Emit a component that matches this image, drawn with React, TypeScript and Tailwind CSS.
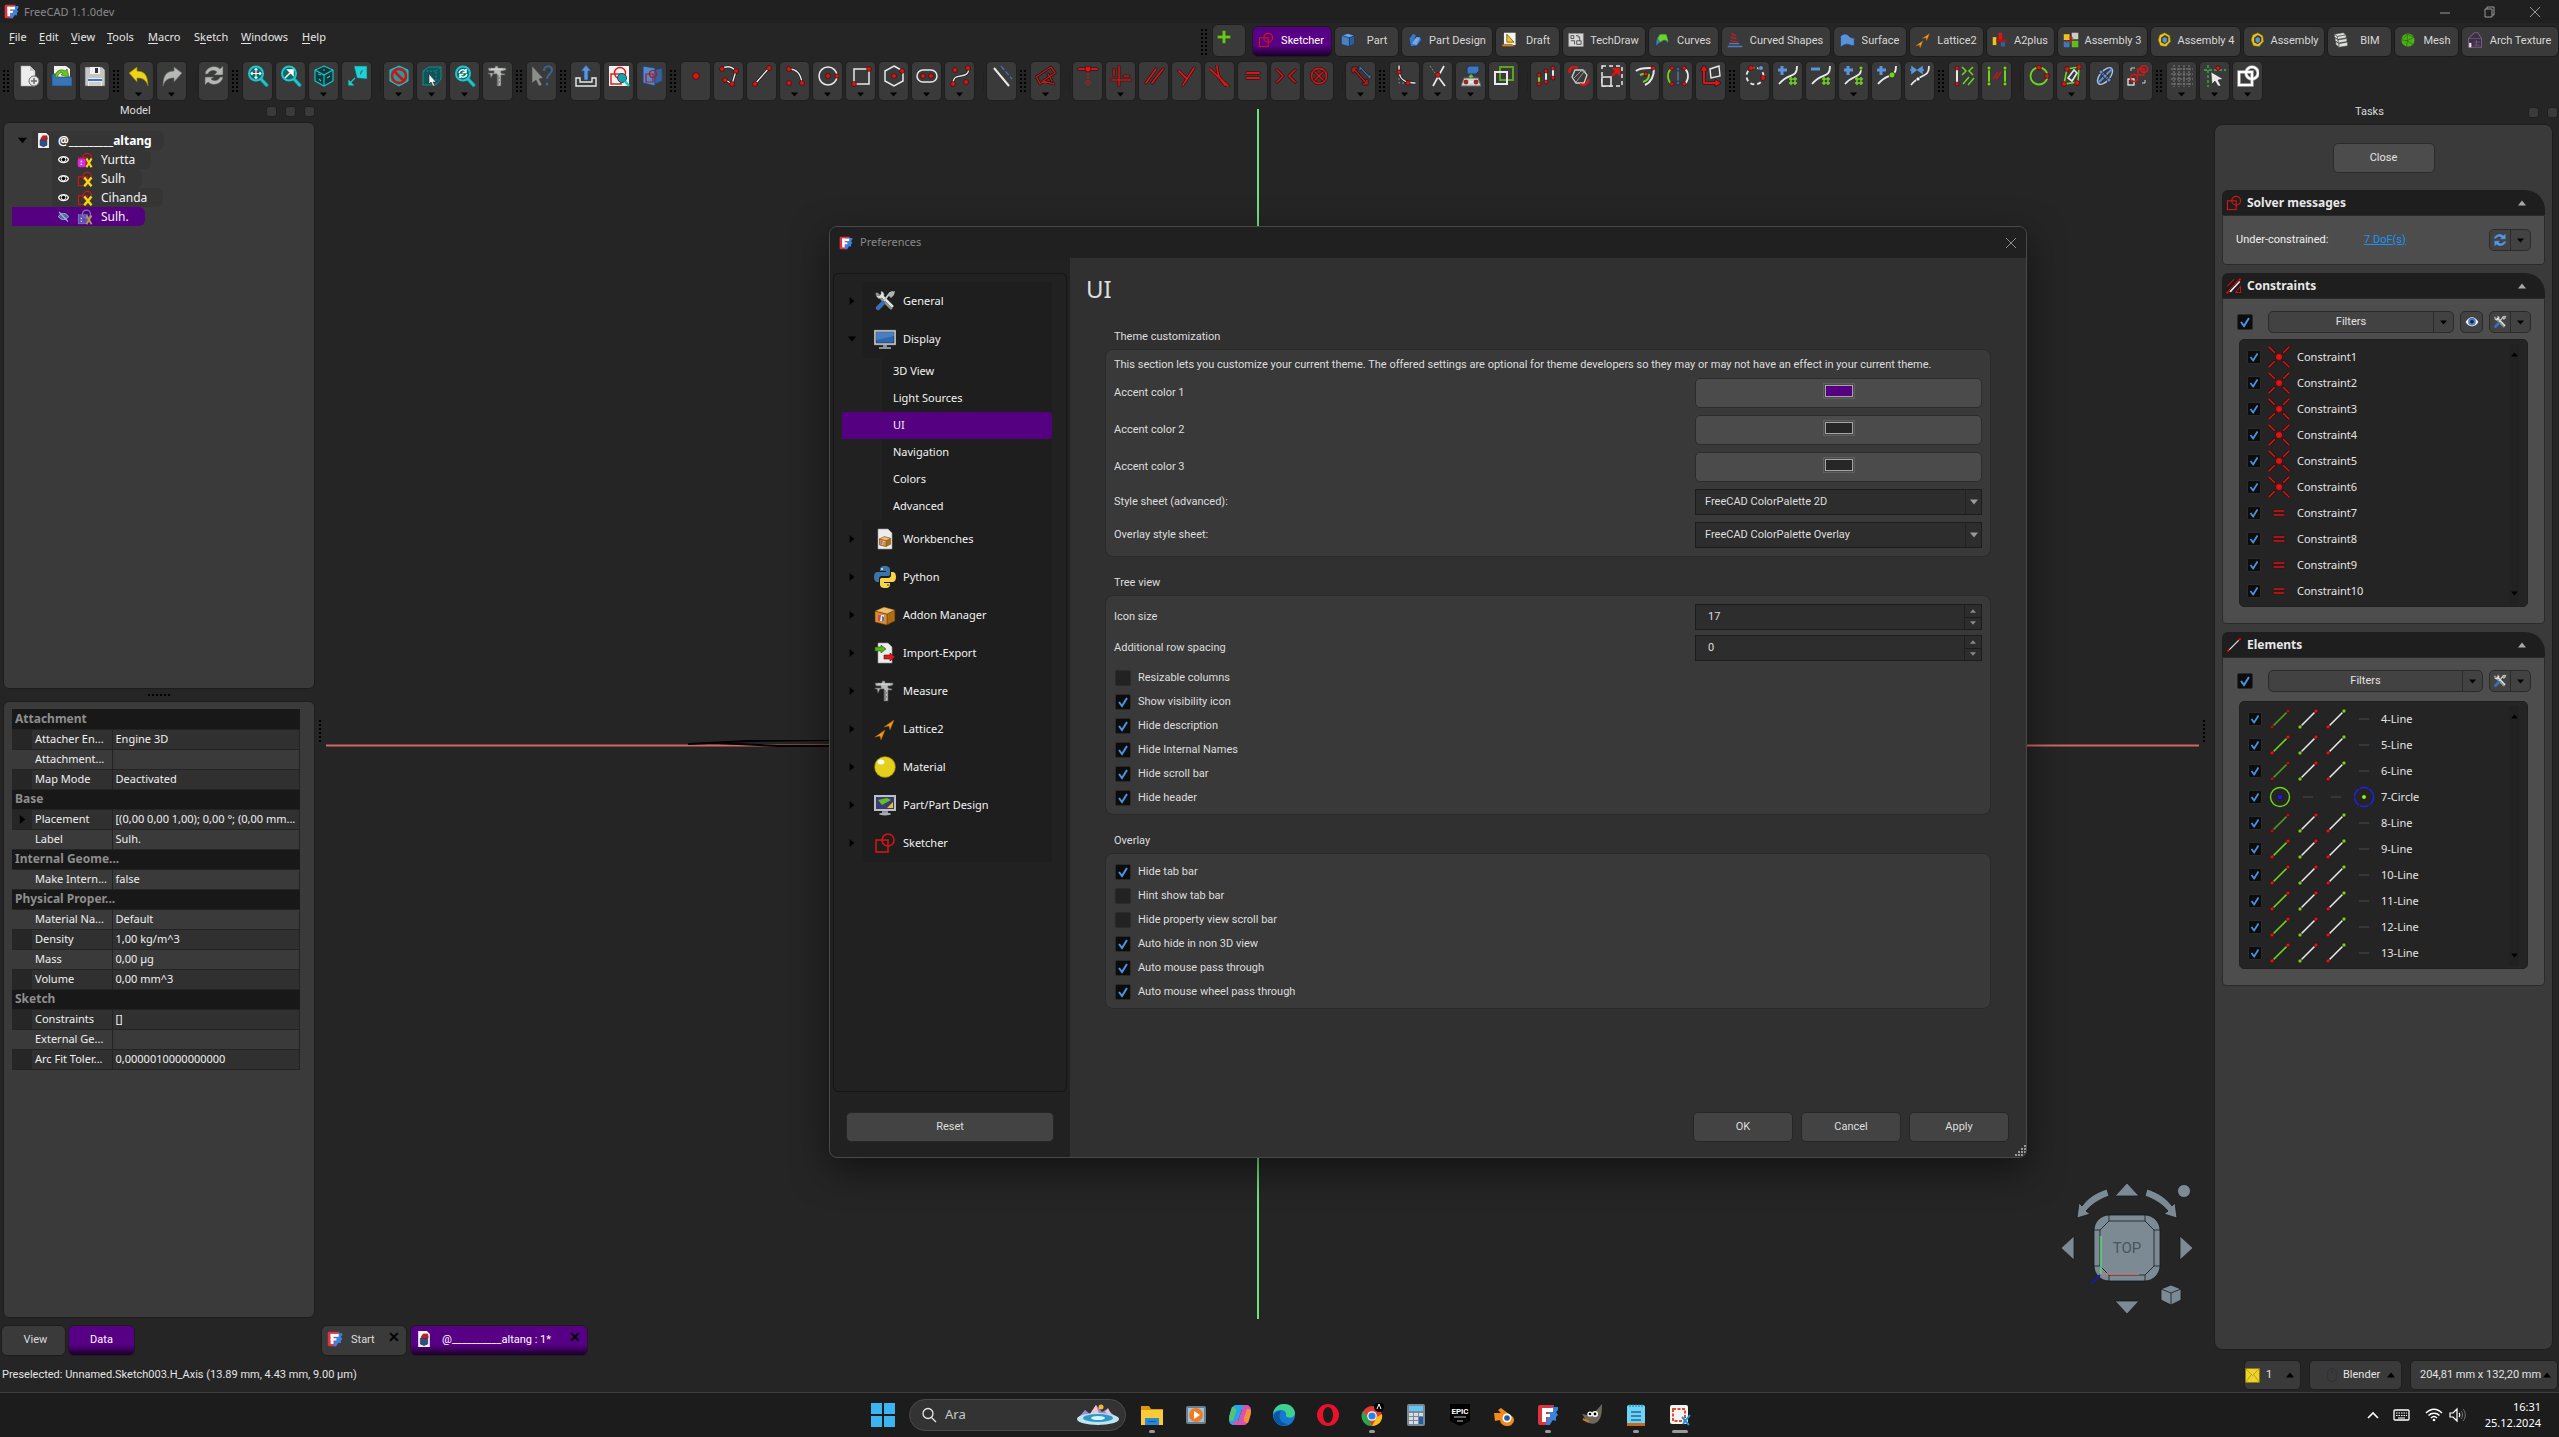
import React, { ReactNode, useId } from "react";

const NOTO = "font-['Noto_Sans',sans-serif]";

/* ---------- drawing helpers ---------- */

function P({ d, c = "#e01414", w = 2, o = true, f = "none" }: { d: string; c?: string; w?: number; o?: boolean; f?: string }) {
  return (
    <>
      {o && <path d={d} fill="none" stroke="#1a1010" strokeWidth={w + 1.2} strokeLinecap="round" strokeLinejoin="round" />}
      <path d={d} fill={f} stroke={c} strokeWidth={w} strokeLinecap="round" strokeLinejoin="round" />
    </>
  );
}

function D({ x, y, c = "#e01414", r = 2 }: { x: number; y: number; c?: string; r?: number }) {
  return <circle cx={x} cy={y} r={r} fill={c} stroke="#2a0808" strokeWidth={0.6} />;
}

const W = "#e8eaea";
const G = "#6fd41e";
const B = "#5b95dc";
const T = "#1fc8cc";

const Sheet = () => <path d="M4 1h10l4 4v16H4z" fill="#ececec" stroke="#999" strokeWidth={0.6} />;

const Lens = ({ children }: { children?: ReactNode }) => (
  <>
    <path d="M13.500 13.500l6 6.500" stroke="#128c90" strokeWidth={4} strokeLinecap="round" />
    <path d="M13.500 13.500l6 6.500" stroke={T} strokeWidth={2.400} strokeLinecap="round" />
    <circle cx={9} cy={8.500} r={7} fill="#12686b" stroke={T} strokeWidth={2} />
    {children}
  </>
);

const Caliper = () => (
  <>
    <path d="M1 3h7V1h3v2h8v2l-3 1h-2v2l4 1v1h-4v11h-4V9H6l-2 4-1-4H1V8h6V6H2z" fill="#b9bdb9" stroke="#555" strokeWidth={0.7} />
    <path d="M10 11h2M10 13h3M10 15h2M10 17h3M10 19h2" stroke="#444" strokeWidth={0.8} />
    <path d="M4 4h12" stroke="#e6e6e6" strokeWidth={0.8} />
  </>
);

const Grid = ({ x, y }: { x: number; y: number }) => (
  <path d={`M${x + 2} ${y}v8M${x + 6} ${y}v8M${x} ${y + 2}h8M${x} ${y + 6}h8`} stroke={G} strokeWidth={1.500} />
);

const SketchMark = () => (
  <>
    <rect x={2} y={8} width={12} height={12} fill="none" stroke="#d01616" strokeWidth={1.600} />
    <circle cx={14} cy={8} r={6} fill="none" stroke="#d01616" strokeWidth={1.600} />
  </>
);

const Plane = ({ x, y }: { x: number; y: number }) => (
  <path d={`M${x} ${y + 7}L${x + 10} ${y}L${x + 6} ${y + 10}L${x + 5} ${y + 6}z`} fill="#f39a1e" stroke="#a35d00" strokeWidth={0.5} />
);

const Nut = () => (
  <>
    <path d="M5 4l7-3 7 4 1 8-6 7-8-1-3-8z" fill="#e8c51c" stroke="#7a6200" strokeWidth={0.8} />
    <path d="M7 8l5-4 5 3 0 6-5 4-5-3z" fill="#3c3c3c" />
    <path d="M9 9l3-2 3 2v4l-3 2-3-2z" fill="#5e93c8" />
  </>
);

const Box3 = ({ c1 = "#6ea4dc", c2 = "#2d5d9c", c3 = "#4a80c2" }: { c1?: string; c2?: string; c3?: string }) => (
  <g stroke="#12294a" strokeWidth={0.6}>
    <path d="M2 5l9-3 9 3-7 3z" fill={c1} />
    <path d="M2 5l11 3v12L2 17z" fill={c3} />
    <path d="M13 8l7-3v11l-7 4z" fill={c2} />
  </g>
);

const Tools = () => (
  <>
    <path d="M3 4l4 4M7 8l10 10" stroke="#8f9792" strokeWidth={3} strokeLinecap="round" />
    <path d="M2 5a4 4 0 0 0 6 3l10 10 2-2L10 6a4 4 0 0 0-3-5l0 3-2 2z" fill="#dfe2dd" stroke="#555" strokeWidth={0.5} />
    <path d="M19 2l-3 1-8 10" fill="none" stroke="#c9cdc8" strokeWidth={2} />
    <path d="M9 13l-5 5" stroke="#3a6fb5" strokeWidth={4.500} strokeLinecap="round" />
    <path d="M14 5l3-3 4-1-1 4-3 3z" fill="#aab3ad" />
  </>
);

const Package = () => (
  <>
    <path d="M1 7l9-4 11 3v11l-8 4-12-3z" fill="#b06c12" stroke="#4a2c05" strokeWidth={0.7} />
    <path d="M1 7l12 3v11L1 18z" fill="#d68f30" stroke="#4a2c05" strokeWidth={0.5} />
    <path d="M1 7l9-4 11 3-8 4z" fill="#f0bd6e" stroke="#4a2c05" strokeWidth={0.5} />
    <rect x={4} y={11} width={6} height={6} fill="#e8e8ee" />
    <path d="M4 11h3l-1 6H4z" fill="#d8434c" />
    <path d="M8 12l2 1v4H8z" fill="#3f7fd0" />
  </>
);

const FreeCadMark = () => (
  <>
    <path d="M3 1h14l-4 20H3a2 2 0 0 1-2-2V3a2 2 0 0 1 2-2z" fill="#d9343f" />
    <path d="M11 10l3-7h7v3l-2 2 2 3-2 2 0 4-3-1-2 3-2 2h-3z" fill="#3b82dc" />
    <rect x={5} y={4} width={4} height={14} fill="#fff" />
    <rect x={5} y={4} width={11} height={4} fill="#fff" />
    <rect x={5} y={10} width={8} height={3} fill="#fff" />
  </>
);

const LineIcon = ({ c = W, a = "#e01414", b = "#e01414" }: { c?: string; a?: string; b?: string }) => (
  <>
    <path d="M3 19L19 3" stroke={c} strokeWidth={1.600} />
    <D x={3} y={19} c={a} />
    <D x={19} y={3} c={b} />
  </>
);

const icons: Record<string, ReactNode> = {
  new: (
    <>
      <path d="M3 1h9l5 5v15H3z" fill="#ededed" stroke="#aaa" strokeWidth={0.6} />
      <path d="M12 1v5h5z" fill="#c7c7c7" />
      <circle cx={16} cy={16} r={5} fill="#e8e8e8" stroke="#6a6a6a" />
      <path d="M16 13v6M13 16h6" stroke="#6a6a6a" strokeWidth={1.500} />
    </>
  ),
  open: (
    <>
      <path d="M3 1h12l4 3v10H3z" fill="#f2f2f2" />
      <path d="M1 9h4l2 3h14v9H1z" fill="#3973b8" stroke="#1c4376" strokeWidth={0.6} />
      <path d="M4 12c0-6 6-9 10-6l2-2 2 8-8-2 2-2c-3-1-5 1-6 5z" fill="#6cc51c" stroke="#2c6a00" strokeWidth={0.6} />
    </>
  ),
  save: (
    <>
      <path d="M1 2h17l3 3v16H1z" fill="#c3c6c2" stroke="#555" strokeWidth={0.6} />
      <rect x={6} y={2} width={10} height={7} fill="#f0f0f0" />
      <rect x={11} y={3} width={3} height={5} fill="#333" />
      <rect x={4} y={13} width={14} height={8} fill="#ececec" />
      <path d="M4 14h14v2H4z" fill="#3f76bb" />
      <path d="M5 18h12M5 20h12" stroke="#999" strokeWidth={0.7} />
    </>
  ),
  undo: <path d="M1 8l8-6v4c8 0 11 5 11 15-2-6-5-8-11-8v4z" fill="#ecd41b" stroke="#8c7600" strokeWidth={0.7} />,
  redo: <path d="M21 8l-8-6v4c-8 0-11 5-11 15 2-6 5-8 11-8v4z" fill="#b5b8b5" stroke="#666" strokeWidth={0.7} />,
  refresh: (
    <g fill="#b5b8b5" stroke="#555" strokeWidth={0.6}>
      <path d="M2 9C3 2 12-1 17 4l3-3v9h-9l3-3c-4-3-8-1-9 2z" />
      <path d="M20 12c-1 7-10 10-15 5l-3 3v-8h9l-3 2c4 3 8 1 9-2z" />
    </g>
  ),
  fitall: <Lens><path d="M9 3.500v10M4 8.500h10M7.500 5L9 3.500 10.500 5M7.500 12L9 13.500l1.500-1.500M5.500 7L4 8.500 5.500 10M12.500 7l1.500 1.500-1.500 1.500" fill="none" stroke="#fff" strokeWidth={1.100} /></Lens>,
  fitsel: <Lens><path d="M5 13l6-6M8 5h5v5z" fill="#fff" stroke="#fff" strokeWidth={1.500} /></Lens>,
  iso: (
    <g fill="#0c3a3c" stroke={T} strokeWidth={1.100}>
      <path d="M11 1l9 4v11l-9 5-9-5V5z" />
      <path d="M2 5l9 5 9-5M11 10v11" fill="none" />
      <path d="M5 9l3 1M14 13l3-2M6 14l2 2M10 5l2 0" fill="none" />
    </g>
  ),
  align: (
    <>
      <path d="M8 1h13v13l-10-1z" fill="#22cfd3" stroke="#0a6a6c" strokeWidth={0.6} />
      <path d="M14 10c0-3 1-5 3-5l-2 4z" fill="#0f7d80" />
      <path d="M9 13l-4 4M3 16v4h4z" stroke={T} strokeWidth={1.200} fill={T} />
    </>
  ),
  drawstyle: (
    <>
      <path d="M11 1l9 4v11l-9 5-9-5V5z" fill="#1f9fa2" stroke={T} />
      <circle cx={11} cy={11} r={7} fill="none" stroke="#cf1212" strokeWidth={2.600} />
      <path d="M6 6l10 10" stroke="#cf1212" strokeWidth={2.600} />
    </>
  ),
  boxsel: (
    <>
      <path d="M2 6l6-4h12v12l-5 6H2z" fill="#0d5558" stroke="#1a8a8d" />
      <path d="M2 6h13v14M15 6l5-4" fill="none" stroke="#1a8a8d" strokeDasharray="2 1.500" />
      <path d="M8 9l7 8-3 0 2 4-2 0-2-4-2 2z" fill="#f5f5f5" stroke="#222" strokeWidth={0.5} />
    </>
  ),
  sync: <Lens><path d="M5 8c1-4 6-4 7-1M13 9c-1 4-6 4-7 1M12 4v3.500H8.500M6 13V9.500h3.500" fill="none" stroke="#e6ffff" strokeWidth={1.500} /></Lens>,
  measure: <Caliper />,
  whatsthis: (
    <>
      <path d="M1 1l11 12-4 1 3 6-3 1-3-6-4 3z" fill="#8b8f8b" stroke="#444" strokeWidth={0.6} />
      <path d="M13 6c0-6 8-6 8-1 0 4-5 4-5 9" fill="none" stroke="#3d6296" strokeWidth={2} />
      <circle cx={16} cy={19} r={1.500} fill="#3d6296" />
    </>
  ),
  leave: (
    <>
      <path d="M1 13h4v4h12v-4h4v8H1z" fill="none" stroke={W} strokeWidth={1.400} />
      <path d="M11 0l5 6h-3v9H9V6H6z" fill={B} stroke="#214c85" strokeWidth={0.7} />
    </>
  ),
  viewsketch: (
    <>
      <rect x={1} y={1} width={20} height={20} fill="#f1f1f1" />
      <rect x={3} y={9} width={10} height={10} fill="none" stroke="#e01414" strokeWidth={1.400} />
      <circle cx={12} cy={8} r={5.500} fill="none" stroke="#e01414" strokeWidth={1.400} />
      <circle cx={14} cy={13} r={4.500} fill="#1d9fa8" stroke="#0a5a60" />
      <path d="M17 16l4 5" stroke={T} strokeWidth={2.500} />
    </>
  ),
  viewsection: (
    <>
      <path d="M2 1l12 2v18L2 18z" fill="#5288cc" stroke="#1f447a" />
      <path d="M14 5l7-2v13l-7 3z" fill="#34629f" stroke="#1f447a" strokeWidth={0.6} />
      <path d="M5 9h7v8H5z" fill="none" stroke="#b01616" strokeWidth={1.200} />
      <circle cx={12} cy={9} r={3.500} fill="none" stroke="#b01616" strokeWidth={1.200} />
    </>
  ),
  point: <D x={11} y={11} r={3.300} />,
  polyline: (
    <>
      <P d="M4 4c5-4 10-2 14 2l-4 13-6-4" c={W} w={1.400} />
      <D x={4} y={4} r={2.400} /><D x={18} y={6} r={2.400} /><D x={14} y={19} r={2.400} /><D x={7} y={15} r={2.400} />
    </>
  ),
  line: (
    <>
      <P d="M4 19L18 3" c={W} w={1.400} />
      <D x={4} y={19} r={2.400} /><D x={18} y={3} r={2.400} />
    </>
  ),
  arc: (
    <>
      <P d="M5 4c8 0 12 6 13 14" c={W} w={1.400} />
      <D x={5} y={4} r={2.400} /><D x={18} y={18} r={2.400} /><D x={5} y={18} r={2.400} />
    </>
  ),
  circle: (
    <>
      <circle cx={11} cy={11} r={9} fill="none" stroke={W} strokeWidth={1.500} />
      <D x={11} y={11} r={2.400} /><D x={20} y={11} r={2.200} />
    </>
  ),
  rect: (
    <>
      <rect x={4} y={4} width={15} height={15} fill="none" stroke={W} strokeWidth={1.500} />
      <D x={19} y={4} r={2.400} /><D x={4} y={19} r={2.400} />
    </>
  ),
  poly: (
    <>
      <path d="M11 1l9 5v10l-9 5-9-5V6z" fill="none" stroke={W} strokeWidth={1.500} />
      <D x={11} y={11} r={2.400} /><D x={19} y={6} r={2.400} />
    </>
  ),
  slot: (
    <>
      <rect x={1} y={5} width={20} height={12} rx={6} fill="none" stroke={W} strokeWidth={1.500} />
      <D x={7} y={11} r={2.400} /><D x={15} y={11} r={2.400} />
    </>
  ),
  spline: (
    <>
      <P d="M4 19c0-14 15-2 16-16" c={W} w={1.400} />
      <D x={4} y={19} r={2.400} /><D x={19} y={3} r={2.400} /><D x={6} y={5} r={2.400} /><D x={17} y={17} r={2.400} />
    </>
  ),
  construction: (
    <>
      <path d="M3 3l15 18" stroke={W} strokeWidth={2} />
      <path d="M10 1l11 13" stroke="#4575b4" strokeWidth={1.200} strokeDasharray="5 2" />
    </>
  ),
  dimension: <P d="M1 12L16 2l4 6-12 8 11 3M2 13l3 6 4-3M13 9l4 7" c="#c01818" w={1.500} />,
  coincident: (
    <>
      <P d="M2 4h18" w={1.800} />
      <D x={11} y={4} r={3} />
      <path d="M11 8v8" stroke="#c01818" strokeWidth={1.300} strokeDasharray="2 1.500" />
      <circle cx={11} cy={18} r={2} fill="none" stroke="#c01818" />
    </>
  ),
  hv: <P d="M9 1v20M1 15h20M4 4v7M14 11h5" w={1.500} />,
  parallel: <P d="M3 18L13 4M9 18L20 4" w={1.800} />,
  perp: <P d="M18 3L7 20M3 6l8 8" w={1.800} />,
  tangent: <P d="M1 4l18 17M8 1c0 9 3 14 8 19" w={1.800} />,
  equal: <P d="M5 8h12M5 13h12" w={2} />,
  symmetric: <P d="M2 5l6 6-6 6M20 5l-6 6 6 6" w={1.700} />,
  block: (
    <>
      <circle cx={11} cy={11} r={7.500} fill="none" stroke="#1a1010" strokeWidth={3} />
      <circle cx={11} cy={11} r={7.500} fill="none" stroke="#d01818" strokeWidth={1.800} />
      <P d="M7 7l8 8M15 7l-8 8" w={1.600} />
    </>
  ),
  toggle: (
    <>
      <P d="M3 3l14 16M3 3l0 4M3 3l4 0M17 19v-4M17 19h-4" c="#c01818" w={1.600} />
      <P d="M10 2l10 11M20 13v-3M10 2v3" c="#466fa8" w={1.300} />
    </>
  ),
  fillet: (
    <>
      <path d="M5 1v17h16" fill="none" stroke="#888" strokeDasharray="2 2" />
      <P d="M5 1v6c1 7 5 11 16 11" c={W} w={1.500} />
      <D x={5} y={7} r={2.200} /><D x={14} y={18} r={2.200} />
    </>
  ),
  trim: (
    <>
      <path d="M17 1L6 21M9 9l9 12" stroke={W} strokeWidth={1.700} />
      <path d="M3 1l5 7" stroke="#888" strokeDasharray="2 1.500" />
      <D x={11} y={10} r={2.400} />
    </>
  ),
  external: (
    <>
      <path d="M7 3l2-2h10v5l-3 3H7z" fill="#3f76c0" stroke="#17345e" />
      <path d="M11 9v4M9 11l2 3 2-3z" stroke={G} fill={G} />
      <path d="M1 21l3-8h14l3 8z" fill="#cfd3cf" stroke="#666" />
      <path d="M6 17h10" stroke="#fff" /><D x={6} y={17} /><D x={16} y={17} />
    </>
  ),
  carbon: (
    <>
      <rect x={7} y={2} width={13} height={13} fill="none" stroke="#5aa31a" strokeWidth={2} />
      <rect x={2} y={7} width={12} height={12} fill="none" stroke={W} strokeWidth={2} />
    </>
  ),
  translate: (
    <>
      <path d="M4 11v8" stroke={G} strokeWidth={2} /><path d="M11 7v9M18 3v10" stroke={W} strokeWidth={2} />
      <D x={4} y={10} /><D x={4} y={19} /><D x={11} y={6} /><D x={11} y={17} /><D x={18} y={3} /><D x={18} y={13} />
    </>
  ),
  rotate: (
    <>
      <path d="M7 5h8l4 5-3 8H8l-4-6z" fill="none" stroke="#cfd2cf" strokeWidth={1.300} />
      <path d="M5 14L13 6h5M8 17l8-10" fill="none" stroke="#999" />
      <path d="M1 7c1-5 5-6 9-4M4 2L1 8M21 14c-1 5-5 7-9 5M17 20l4-5" fill="none" stroke="#e01414" strokeWidth={2.200} />
    </>
  ),
  scale: (
    <>
      <rect x={1} y={1} width={20} height={20} fill="none" stroke={W} strokeDasharray="4 3" strokeWidth={1.500} />
      <rect x={1} y={12} width={9} height={9} fill="#3a3a3a" stroke={W} strokeWidth={1.500} />
      <path d="M11 11l5-5M13 4h5v5z" stroke="#e01414" fill="#e01414" strokeWidth={2} />
    </>
  ),
  offset: (
    <>
      <path d="M2 6C6 2 16 3 20 3c0 8-2 14-9 17" fill="none" stroke={W} strokeWidth={2} />
      <path d="M6 10c5-2 8-1 9 0 0 4-3 6-6 7" fill="none" stroke={G} strokeWidth={2} />
      <D x={12} y={9} /><D x={19} y={3} />
    </>
  ),
  symmetry: (
    <>
      <path d="M6 2C-1 7 0 15 5 20" fill="none" stroke={G} strokeWidth={1.800} />
      <path d="M16 2c7 5 6 13 1 18" fill="none" stroke={W} strokeWidth={1.800} />
      <path d="M11 4v14" stroke={B} /><D x={11} y={4} c="#3465a4" /><D x={11} y={18} c="#3465a4" />
      <D x={5} y={3} /><D x={17} y={3} /><D x={5} y={19} /><D x={17} y={19} />
    </>
  ),
  axes: (
    <>
      <P d="M4 18V3M2 5l2-3 2 3M4 18h14M16 16l3 2-3 2" w={2} />
      <path d="M10 4l9-3 1 10-9 2z" fill="none" stroke={W} strokeWidth={1.400} />
    </>
  ),
  nurbs: (
    <>
      <circle cx={11} cy={11} r={8.500} fill="none" stroke={W} strokeWidth={1.800} strokeDasharray="4 3" />
      <D x={7} y={3} r={2.500} /><D x={17} y={3} r={2.500} c={B} /><D x={19} y={13} r={2.500} />
    </>
  ),
  degup: (
    <>
      <path d="M5 1v9M1 5h9" stroke={B} strokeWidth={3} />
      <path d="M20 1c0 13-8 6-18 18" fill="none" stroke={W} strokeWidth={1.800} /><Grid x={12} y={12} />
    </>
  ),
  degdown: (
    <>
      <path d="M1 4h9" stroke={B} strokeWidth={3} />
      <path d="M20 1c0 13-8 6-18 18" fill="none" stroke={W} strokeWidth={1.800} /><Grid x={12} y={12} />
    </>
  ),
  knotup: (
    <>
      <path d="M5 1v9M1 5h9" stroke={B} strokeWidth={3} />
      <path d="M18 2c1 12-8 7-16 17" fill="none" stroke={W} strokeWidth={1.800} />
      <Grid x={12} y={12} /><D x={18} y={3} c={G} />
    </>
  ),
  insertknot: (
    <>
      <path d="M5 1v9M1 5h9" stroke={B} strokeWidth={3} />
      <path d="M20 1c0 13-8 6-18 18" fill="none" stroke={W} strokeWidth={1.800} /><D x={16} y={10} c={G} r={3} />
    </>
  ),
  join: (
    <>
      <path d="M1 5h4M3 2l4 3-4 3zM15 5h-4M13 2L9 5l4 3z" stroke={B} fill={B} strokeWidth={1.500} />
      <path d="M20 1c0 13-8 6-18 19" fill="none" stroke={W} strokeWidth={1.800} /><D x={9} y={14} c="#fff" />
    </>
  ),
  selconstr: (
    <>
      <path d="M4 3v16" stroke={W} strokeWidth={2} /><D x={4} y={3} /><D x={4} y={19} />
      <path d="M9 2l4 4-4 4M20 2l-4 4 4 4M10 19l6-7M15 20l6-7" fill="none" stroke={G} strokeWidth={1.500} />
    </>
  ),
  selelem: (
    <>
      <path d="M3 3v16M19 3v16" stroke={G} strokeWidth={2} />
      <D x={3} y={3} c={G} /><D x={3} y={19} c={G} /><D x={19} y={3} c={G} /><D x={19} y={19} c={G} />
      <path d="M7 14l5-7M10 14l5-7" stroke="#c01818" strokeWidth={1.500} />
    </>
  ),
  arcsel: (
    <>
      <circle cx={11} cy={11} r={8.500} fill="none" stroke={G} strokeWidth={1.800} />
      <D x={11} y={2.500} r={2.400} /><D x={19} y={11} r={2.400} />
    </>
  ),
  polysel: (
    <>
      <path d="M6 4l12-2-1 15L3 19z" fill="none" stroke={G} strokeWidth={1.600} />
      <path d="M7 13l6-8 3 3-5 8z" fill="none" stroke={W} strokeWidth={1.600} />
      <D x={6} y={4} r={2.400} /><D x={18} y={2} r={2.400} /><D x={16} y={18} r={2.400} /><D x={3} y={19} r={2.400} />
    </>
  ),
  ellipse: (
    <>
      <ellipse cx={11} cy={11} rx={10} ry={5} transform="rotate(-50 11 11)" fill="none" stroke="#a8c6ea" strokeWidth={1.400} />
      <path d="M4 18L18 4M7 7l8 8" stroke={B} strokeWidth={1.800} />
      <D x={11} y={11} c={B} /><D x={7} y={7} c={B} /><D x={15} y={15} c={B} />
    </>
  ),
  swap: (
    <>
      <rect x={1} y={14} width={6} height={6} fill="none" stroke={W} strokeWidth={1.300} />
      <circle cx={7} cy={13} r={3.500} fill="none" stroke="#e01414" strokeWidth={1.500} />
      <rect x={11} y={4} width={6} height={6} fill="none" stroke="#e01414" strokeWidth={1.300} />
      <circle cx={17} cy={4} r={3.500} fill="none" stroke="#e01414" strokeWidth={1.500} />
      <path d="M4 6V3h4M15 18h3v-3" fill="none" stroke="#ccc" />
    </>
  ),
  grid: <path d="M3 0v22M8 0v22M13 0v22M18 0v22M0 4h22M0 9h22M0 14h22M0 19h22" stroke="#888" strokeWidth={0.9} strokeDasharray="2 1" />,
  snap: (
    <>
      <path d="M4 0v22M0 5h22" stroke="#39b54a" strokeWidth={1.300} strokeDasharray="3 2" />
      <path d="M7 7l12 7-5 1 3 6-3 0-3-5-3 3z" fill="#e8e8e8" stroke="#222" strokeWidth={0.5} />
      <D x={14} y={3} r={2.200} />
    </>
  ),
  order: (
    <>
      <rect x={2} y={7} width={13} height={13} fill="none" stroke="#aaa" strokeWidth={3.500} />
      <circle cx={15} cy={8} r={6} fill="none" stroke="#aaa" strokeWidth={3.500} />
      <rect x={2} y={7} width={13} height={13} fill="none" stroke="#fff" strokeWidth={2} />
      <circle cx={15} cy={8} r={6} fill="none" stroke="#fff" strokeWidth={2} />
    </>
  ),

  sketcher: <SketchMark />,
  part: <Box3 />,
  partdesign: (
    <>
      <path d="M3 9l5-7 5 2-2 5 7-3 2 5-6 8-9 1z" fill="#3f76c0" stroke="#16315a" strokeWidth={0.8} />
      <path d="M7 16l6-9 5 1-5 10z" fill="#78a8e0" />
    </>
  ),
  draft: (
    <>
      <path d="M4 1h16v17H4z" fill="#f4f4f4" /><path d="M8 3v11h10z" fill="#f0c81a" stroke="#5c4700" />
      <path d="M1 17h14l4 3H2z" fill="#c98a2d" stroke="#5c3a05" strokeWidth={0.6} />
    </>
  ),
  techdraw: (
    <>
      <rect x={1} y={2} width={20} height={18} fill="#d8d8d8" stroke="#888" />
      <path d="M4 5h4v4H4zM11 5h3v3M16 6v6M4 12h5v5M12 12h6v5h-6z" fill="none" stroke="#444" strokeWidth={1.200} />
    </>
  ),
  curves: (
    <>
      <path d="M3 20C1 10 5 3 11 2s9 3 9 16c-3-6-6-7-8-5s-6 2-9 7z" fill="#3f76c0" stroke="#173056" />
      <path d="M8 3l9 0 3 10-6-2-6 3-3-5z" fill="#74cf2a" stroke="#2a6a00" strokeWidth={0.7} />
    </>
  ),
  cshapes: (
    <>
      <path d="M6 1l6 5 4 9 5 6H1l4-7z" fill="#3c3c46" />
      <path d="M6 2l6 3M5 7l8 2M4 12l11 2" stroke="#c22020" strokeWidth={1.800} />
      <path d="M3 16h14M1 20h20" stroke="#4f7fc0" strokeWidth={2} />
    </>
  ),
  surface: <path d="M2 6c5-5 9-4 12 0 2 2 5 3 7 2v11c-6 0-8-3-11-2s-6 2-8 4z" fill="#5b92d6" stroke="#1d3d6e" />,
  lattice: (
    <>
      <Plane x={10} y={2} />
      <Plane x={1} y={12} />
    </>
  ),
  a2plus: (
    <>
      <path d="M9 1h5v10H9z" fill="#e01414" /><path d="M1 7h5v11H1z" fill="#e8c51c" />
      <path d="M6 10h14v4H6z" fill="#b11414" /><path d="M12 14h6v6h-6z" fill="#355f9c" />
    </>
  ),
  asm3: (
    <>
      <path d="M1 3h8v8H1z" fill="#e8c51c" /><path d="M12 1h9v9h-9z" fill="#c9cdc8" />
      <path d="M1 13h8v8H1z" fill="#3f76c0" /><path d="M12 12h9v9h-9z" fill="#5dbf1e" />
      <path d="M9 8h5M11 6v10M5 11v4" stroke="#e01414" strokeWidth={1.600} />
    </>
  ),
  nut: <Nut />,
  bim: (
    <g fill="#dfe3df" stroke="#555" strokeWidth={0.8}>
      <path d="M2 3l12-2 4 3-12 2zM2 3l4 3v4L2 7zM6 6l12-2v4L6 10zM3 8l4 3v4l-4-3zM7 11l12-2v4L7 15zM4 13l4 3v5l-4-4zM8 16l12-2v5L8 21z" />
    </g>
  ),
  mesh: (
    <>
      <circle cx={11} cy={11} r={9} fill="#4fae17" />
      <path d="M2 11l8-8 9 4-9 5 8 6M2 11l8 1-1 8M10 3v9" fill="none" stroke="#236400" strokeWidth={0.9} />
    </>
  ),
  archtex: (
    <>
      <path d="M2 9l8-8h5l5 8v12H2z" fill="#3b3040" stroke="#7a5b84" strokeWidth={1.400} />
      <path d="M2 9h18M9 14h9M9 18h9M13 11v9" stroke="#7a5b84" />
      <path d="M3 15h3v6H3z" fill="#ededed" />
    </>
  ),
  tools: <Tools />,
  display: (
    <>
      <rect x={0} y={2} width={22} height={15} fill="#c9ccd0" stroke="#666" strokeWidth={0.5} />
      <rect x={2} y={4} width={18} height={11} fill="#2f66ad" stroke="#123" strokeWidth={0.5} />
      <path d="M2 4h18v4L2 12z" fill="#5b8dcb" opacity={0.6} />
      <path d="M9 17h4v2h4v2H5v-2h4z" fill="#8c9196" />
    </>
  ),
  workbenches: (
    <>
      <Sheet />
      <g transform="translate(5 7) scale(.55)"><Package /></g>
    </>
  ),
  python: (
    <>
      <path d="M11 0c-5 0-5 2-5 5h6v1H3c-4 0-4 10 0 10h2v-3c0-2 1-3 3-3h6c2 0 2-1 2-2V4c0-3-2-4-5-4z" fill="#3b74a8" />
      <path d="M11 22c5 0 5-2 5-5h-6v-1h9c4 0 4-10 0-10h-2v3c0 2-1 3-3 3H8c-2 0-2 1-2 2v4c0 3 2 4 5 4z" fill="#f7d54a" />
      <circle cx={8} cy={3} r={1} fill="#dfe9f2" /><circle cx={14} cy={19} r={1} fill="#806c10" />
    </>
  ),
  package: <Package />,
  impexp: (
    <>
      <Sheet />
      <path d="M1 5h6V3l5 4-5 4V9H1z" fill="#55b31b" stroke="#225c00" strokeWidth={0.6} />
      <path d="M10 13h6v-2l5 4-5 4v-2h-6z" fill="#d81e1e" stroke="#6d0000" strokeWidth={0.6} />
    </>
  ),
  material: (
    <>
      <ellipse cx={11} cy={11} rx={10.500} ry={10.500} fill="#e3cf1c" stroke="#7c6c00" strokeWidth={0.6} />
      <ellipse cx={7} cy={6} rx={3.500} ry={2.500} fill="#fffef0" />
    </>
  ),
  partpref: (
    <>
      <rect x={0} y={1} width={22} height={16} fill="#bcbfc4" />
      <rect x={2} y={3} width={18} height={12} fill="#3a3a78" />
      <path d="M4 6l9-2 4 2-9 5z" fill="#63bf22" /><path d="M13 14h6V8z" fill="#e8c51c" />
      <path d="M8 17h6v2H8z" fill="#8c9196" /><ellipse cx={11} cy={20} rx={6} ry={1.500} fill="#a8abb0" />
    </>
  ),
  freecad: <FreeCadMark />,
  coinc: (
    <>
      <P d="M1 1l5.500 5.500M21 1l-5.500 5.500M1 21l5.500-5.500M21 21l-5.500-5.500" w={1.500} />
      <D x={11} y={11} r={3.400} />
    </>
  ),
  equalsmall: <P d="M6 9h10M6 13h10" w={1.500} />,
  linew: <LineIcon />,
  lineg: <LineIcon c={G} />,
  linegd: <LineIcon c="#559c1c" a="#a81818" b="#a81818" />,
  linestart: <LineIcon a={G} />,
  lineend: <LineIcon b={G} />,
  dash: <path d="M6 11h10" stroke="#4a4a4a" strokeWidth={1} />,
  circleedge: (
    <>
      <circle cx={11} cy={11} r={9.500} fill="none" stroke={G} strokeWidth={1.400} />
      <D x={11} y={11} c="#1a1aff" r={2.600} />
    </>
  ),
  circlecenter: (
    <>
      <circle cx={11} cy={11} r={9.500} fill="none" stroke="#2020e8" strokeWidth={1.400} strokeDasharray="9 1" />
      <D x={11} y={11} c="#8aff1a" r={2.300} />
    </>
  ),
  constraints: (
    <>
      <path d="M5 19L19 3" stroke={W} strokeWidth={2} />
      <P d="M2 11L11 2M2 19L18 2M13 20h8M13 20l7-9v9" c="#b81818" w={1.500} />
      <path d="M6 19L19 5" stroke={W} strokeWidth={1.600} />
      <D x={2} y={20} /><D x={19} y={2} />
    </>
  ),
  refreshBlue: (
    <g fill={B} stroke="#234a80" strokeWidth={0.6}>
      <path d="M1 9C3 2 12-1 16 4l4-3v9h-9l2-3c-3-2-7-1-8 2z" />
      <path d="M21 13c-2 7-11 10-15 5l-4 3v-9h9l-2 3c3 2 7 1 8-2z" />
    </g>
  ),
  eye: (
    <>
      <path d="M1 11c5-10 15-10 20 0-5 9-15 9-20 0z" fill="#f2f2f2" />
      <circle cx={11} cy={10.500} r={6} fill="#4a7fc4" /><circle cx={11} cy={10.500} r={2.800} fill="#14233c" />
    </>
  ),
  visible: (
    <>
      <path d="M1 11C5 3 17 3 21 11c-4 8-16 8-20 0z" fill="#0a0a0a" stroke="#f4f4f4" strokeWidth={2.500} />
      <circle cx={11} cy={11} r={4.500} fill="none" stroke="#f4f4f4" strokeWidth={2} />
    </>
  ),
  hidden: (
    <>
      <path d="M1 11C5 3 17 3 21 11c-4 8-16 8-20 0z" fill="#4b6d9e" stroke="#9fb6d6" strokeWidth={2} />
      <path d="M2 2l18 19" stroke="#9fb6d6" strokeWidth={2.200} />
    </>
  ),
  doc: (
    <>
      <path d="M3 0h12l4 4v18H3z" fill="#f2f2f2" />
      <path d="M6 10l5-2 5 2v8l-5 2-5-2z" fill="#2d4f86" stroke="#14233c" strokeWidth={0.8} />
      <path d="M10 4l6 0 1 5-6 2-4-3z" fill="#c61f1f" stroke="#5c0c0c" strokeWidth={0.6} />
    </>
  ),
  sk: (
    <>
      <SketchMark />
      <path d="M10 9l10 12M20 9L10 21" stroke="#6b5500" strokeWidth={4.500} /><path d="M10 9l10 12M20 9L10 21" stroke="#f4d81c" strokeWidth={3} />
    </>
  ),
  skattach: (
    <>
      <SketchMark />
      <rect x={1} y={9} width={11} height={12} rx={3} fill="#d62be0" />
      <path d="M6 12v2M6 16v2" stroke="#fff" strokeWidth={2} />
      <path d="M13 9l7 12M20 9l-7 12" stroke="#f4d81c" strokeWidth={3} />
    </>
  ),
  skhidden: (
    <g opacity={0.85}>
      <rect x={2} y={8} width={12} height={12} fill="#6a55c8" stroke="#6f7fb8" strokeWidth={1.600} />
      <circle cx={13} cy={7} r={5.500} fill="none" stroke="#8090c0" strokeWidth={1.600} />
      <path d="M6 12v2M6 16v2" stroke="#cfd" strokeWidth={2} />
      <path d="M13 9l7 12M20 9l-7 12" stroke="#b8b84a" strokeWidth={2.600} />
    </g>
  ),
  plus: <path d="M8.500 1h5v7.500H21v5h-7.500V21h-5v-7.500H1v-5h7.500z" fill="#6cc51c" stroke="#336c00" strokeWidth={0.6} />,
  mail: (
    <>
      <rect x={1} y={1} width={20} height={20} fill="#ecd22a" stroke="#a08600" />
      <path d="M1 1l10 10L21 1M1 21l8-11M21 21l-8-11" fill="none" stroke="#a98c08" />
    </>
  ),
  mouse: (
    <>
      <rect x={5} y={2} width={12} height={18} rx={6} fill="none" stroke="#2d3338" strokeWidth={1.500} />
      <path d="M11 4v5" stroke="#2d3338" strokeWidth={2} />
    </>
  ),
};

function Icon({ n, className = "size-[22px]" }: { n: string; className?: string }) {
  return (
    <svg viewBox="0 0 22 22" className={`${className} shrink-0`} aria-hidden="true">
      {icons[n]}
    </svg>
  );
}

type Dir = "up" | "down" | "left" | "right";
const tri: Record<Dir, string> = { up: "M0 8h10L5 2z", down: "M0 2h10L5 8z", left: "M8 0v10L2 5z", right: "M2 0v10l6-5z" };
function Tri({ dir, className = "size-2 text-black" }: { dir: Dir; className?: string }) {
  return (
    <svg viewBox="0 0 10 10" className={`${className} shrink-0`} aria-hidden="true">
      <path d={tri[dir]} fill="currentColor" />
    </svg>
  );
}

/* ---------- header ---------- */

function TitleBar() {
  return (
    <div className={`flex h-[23px] items-center bg-[#202020] pl-1 text-[#8a8a8a] ${NOTO}`}>
      <Icon n="freecad" className="size-[15px]" />
      <span className="ml-[5px] text-[11px] leading-4">FreeCAD 1.1.0dev</span>
      <div className="ml-auto flex items-center gap-[30px] pr-[17px]">
        <button aria-label="Minimize" className="h-3 w-[15px]"><svg viewBox="0 0 15 12"><path d="M3 7h10" stroke="#999" /></svg></button>
        <button aria-label="Restore" className="h-3 w-[15px]"><svg viewBox="0 0 15 12"><path d="M3 3h7v8H3zM5 3V1h7v8h-2" fill="none" stroke="#999" /></svg></button>
        <button aria-label="Close window" className="h-3 w-[15px]"><svg viewBox="0 0 15 12"><path d="M3 1l10 10M13 1L3 11" stroke="#999" /></svg></button>
      </div>
    </div>
  );
}

const menus: [string, string, string, string][] = [
  ["", "F", "ile", "w-[30px]"], ["", "E", "dit", "w-8"], ["", "V", "iew", "w-9"], ["", "T", "ools", "w-[41px]"],
  ["", "M", "acro", "w-[46px]"], ["S", "k", "etch", "w-[47px]"], ["", "W", "indows", "w-[61px]"], ["", "H", "elp", "w-[30px]"],
];

const workbenches: [string, string, string][] = [
  ["Sketcher", "sketcher", "w-20"], ["Part", "part", "w-[65px]"], ["Part Design", "partdesign", "w-[92px]"],
  ["Draft", "draft", "w-[65px]"], ["TechDraw", "techdraw", "w-[84px]"], ["Curves", "curves", "w-[71px]"],
  ["Curved Shapes", "cshapes", "w-[110px]"], ["Surface", "surface", "w-[74px]"], ["Lattice2", "lattice", "w-[75px]"],
  ["A2plus", "a2plus", "w-[69px]"], ["Assembly 3", "asm3", "w-[91px]"], ["Assembly 4", "nut", "w-[91px]"],
  ["Assembly", "nut", "w-[82px]"], ["BIM", "bim", "w-[65px]"], ["Mesh", "mesh", "w-[65px]"], ["Arch Texture", "archtex", "w-[98px]"],
];

const DOTS = "bg-[radial-gradient(circle,#000_1px,transparent_1px)] bg-[length:4px_4px]";
const PURPLE_TAB = "bg-linear-to-b from-[#580085] from-65% to-[#1b0029] text-white";

function MenuRow() {
  return (
    <div className="flex h-[37px] items-start">
      <nav className={`flex h-[28px] items-center pl-[9px] text-[11px] text-[#e6e6e6] ${NOTO}`}>
        {menus.map(([a, u, b, w]) => (
          <button key={u + b} className={`${w} text-left`}>
            {a}<span className="underline underline-offset-2">{u}</span>{b}
          </button>
        ))}
      </nav>
      <div className="ml-auto flex items-start pt-px">
        <div className={`mt-1 mr-1 h-7 w-2 ${DOTS}`} />
        <button aria-label="Add workbench" className="mr-[6px] flex h-[33px] w-[34px] rounded-md border border-[#1e1e1e] bg-[#3a3a3a] pt-[5px] pl-1">
          <Icon n="plus" className="size-[14px]" />
        </button>
        <div className="flex gap-0.5 pt-0.5">
          {workbenches.map(([t, i, w], k) => (
            <button key={t} className={`${w} flex h-[31px] items-center rounded-md border border-[#1b1b1b] pl-[5px] text-[11px] whitespace-nowrap ${k === 0 ? PURPLE_TAB : "bg-[#3a3a3a] text-[#d8d8d8]"}`}>
              <Icon n={i} className="mb-1 size-4" />
              <span className="flex-1 text-center">{t}</span>
            </button>
          ))}
        </div>
      </div>
    </div>
  );
}

/* "|" draws a grip, "/" a separator, a trailing "*" a drop-down marker */
const toolbar =
  "| new open save | undo* redo* / refresh | fitall fitsel iso* align / drawstyle* boxsel* sync* measure | whatsthis | leave viewsketch viewsection | point polyline line arc* circle* rect* poly* slot* spline* / construction | dimension* / coincident hv* parallel perp tangent equal symmetric block / toggle* | fillet* trim* external* carbon / translate rotate scale offset symmetry axes | nurbs degup degdown knotup* insertknot join | selconstr selelem / arcsel polysel* ellipse swap | grid* snap* order*".split(" ");

function Toolbar() {
  return (
    <div className="flex items-center gap-0.5 pt-px pl-0.5">
      {toolbar.map((t, i) => {
        if (t === "|") return <div key={i} className={`h-6 w-[9px] ${DOTS}`} />;
        if (t === "/") return <div key={i} className="h-5 w-[7px] border-r border-[#202020]" />;
        const n = t.replace("*", "");
        return (
          <button key={i} aria-label={n} className="flex h-10 w-[31px] flex-col items-center rounded-[5px] border border-[#1f1f1f] bg-[#3a3a3a] pt-[3px]">
            <Icon n={n} className="size-[22px]" />
            {t.endsWith("*") && <Tri dir="down" className="mt-1 size-[7px] text-black" />}
          </button>
        );
      })}
    </div>
  );
}

function DockButtons({ n }: { n: number }) {
  return (
    <>
      {Array.from({ length: n }, (_, i) => (
        <button key={i} aria-label={`Dock option ${i + 1}`} className="size-[11px] rounded-[3px] border border-[#1f1f1f] bg-[#3a3a3a]" />
      ))}
    </>
  );
}

/* ---------- left dock ---------- */

const treeItems: [string, string, boolean][] = [
  ["Yurtta", "skattach", true], ["Sulh", "sk", true], ["Cihanda", "sk", true], ["Sulh.", "skhidden", false],
];

type Row = { h: string } | { k: string; v: string; light?: boolean; exp?: boolean };
const props: Row[] = [
  { h: "Attachment" },
  { k: "Attacher En...", v: "Engine 3D" }, { k: "Attachment...", v: "", light: true }, { k: "Map Mode", v: "Deactivated" },
  { h: "Base" },
  { k: "Placement", v: "[(0,00 0,00 1,00); 0,00 °; (0,00 mm...", exp: true }, { k: "Label", v: "Sulh.", light: true },
  { h: "Internal Geome..." },
  { k: "Make Intern...", v: "false", light: true },
  { h: "Physical Proper..." },
  { k: "Material Na...", v: "Default", light: true }, { k: "Density", v: "1,00 kg/m^3" }, { k: "Mass", v: "0,00 µg", light: true }, { k: "Volume", v: "0,00 mm^3" },
  { h: "Sketch" },
  { k: "Constraints", v: "[]" }, { k: "External Ge...", v: "", light: true }, { k: "Arc Fit Toler...", v: "0,0000010000000000" },
];

function LeftDock() {
  return (
    <aside className="flex w-[318px] shrink-0 flex-col">
      <div className="flex h-[21px] items-center gap-2 pr-[3px]">
        <h2 className="ml-[120px] text-[11px] text-[#dcdcdc]">Model</h2>
        <div className="ml-auto flex gap-2"><DockButtons n={3} /></div>
      </div>
      <div className={`mr-[3px] ml-[3px] h-[567px] rounded-md border border-[#1d1d1d] bg-[#3a3a3a] pt-2 pl-2 text-[12px] text-[#f2f2f2] ${NOTO}`}>
        <div className="flex h-[19px] items-center pl-[6px]">
          <Tri dir="down" className="size-[9px] text-black" />
          <div className="ml-[5px] flex h-full items-center gap-[7px] rounded-r-md bg-[#353535] pr-3 pl-1 font-bold text-white">
            <Icon n="doc" className="size-[15px]" />
            @_________altang
          </div>
        </div>
        {treeItems.map(([t, i, vis]) => (
          <div key={t} className={vis ? "flex pl-10" : "flex"}>
            <div className={`flex h-[19px] items-center gap-2 rounded-r-md pr-4 ${vis ? "bg-[#353535] pl-[6px]" : "bg-[#550080] pl-[46px]"}`}>
              <Icon n={vis ? "visible" : "hidden"} className="size-[11px]" />
              <span className="flex items-center gap-2"><Icon n={i} className="size-4" />{t}</span>
            </div>
          </div>
        ))}
      </div>
      <div className="flex h-3 items-center justify-center"><div className={`h-1 w-6 ${DOTS}`} /></div>
      <div className="mr-[3px] ml-[3px] flex-1 rounded-md border border-[#1d1d1d] bg-[#3a3a3a] pt-[7px] pl-2">
        <table className={`w-[288px] table-fixed border-collapse text-[11px] leading-4 ${NOTO}`}>
          <colgroup><col className="w-5" /><col className="w-20" /><col /></colgroup>
          <tbody>
            {props.map((r, i) =>
              "h" in r ? (
                <tr key={i} className="h-5 border-b border-[#232323] bg-[#181818]">
                  <th colSpan={3} className="py-0 pl-[3px] text-left text-[12px] font-bold text-[#8e8e8e]">{r.h}</th>
                </tr>
              ) : (
                <tr key={i} className={`h-5 border-b border-[#232323] text-[#f0f0f0] ${r.light ? "bg-[#3a3a3a]" : "bg-[#303030]"}`}>
                  <td className={`p-0 pl-[6px] ${r.light ? "" : "bg-[#262626]"}`}>{r.exp && <Tri dir="right" className="size-[9px] text-black" />}</td>
                  <td className="overflow-hidden border-r border-[#232323] p-0 pl-[3px] whitespace-nowrap">{r.k}</td>
                  <td className="overflow-hidden border-r border-[#232323] p-0 pl-[3px] whitespace-nowrap">{r.v}</td>
                </tr>
              )
            )}
          </tbody>
        </table>
      </div>
      <div className="mt-[7px] mb-0.5 flex gap-0.5 pl-px text-[11px] text-[#dcdcdc]">
        <button className="h-[31px] w-[65px] rounded-md border border-[#1c1c1c] bg-[#3a3a3a] pl-1">View</button>
        <button className={`h-[31px] w-[67px] rounded-md border border-[#1c1c1c] ${PURPLE_TAB}`}>Data</button>
      </div>
    </aside>
  );
}

/* ---------- centre ---------- */

function NavCube() {
  const f = "#7c8a94";
  return (
    <svg viewBox="0 0 140 140" className="absolute right-[9px] bottom-px size-[140px]" aria-label="Navigation cube">
      <g fill={f} stroke="#15191c" strokeWidth={0.8}>
        <path d="M70 5l12 13H58z" /><path d="M70 136l-12-13h24z" /><path d="M4 70l13-12v24z" /><path d="M136 70l-13-12v24z" />
        <circle cx={127} cy={13} r={6.500} />
        <path d="M50 11c-12 4-19 9-25 17l-3-3-2 15 13-4-4-3c5-6 12-11 23-15z" />
        <path d="M90 11c12 4 19 9 25 17l3-3 2 15-13-4 4-3c-5-6-12-11-23-15z" />
        <path d="M52 37h36c8 0 15 7 15 15v36c0 8-7 15-15 15H52c-8 0-15-7-15-15V52c0-8 7-15 15-15z" />
        <path d="M52 43h36l9 9v36l-9 9H52l-9-9V52z" />
        <path d="M52 43v-6M88 43v-6M97 52h6M97 88h6M88 97v6M52 97v6M43 88h-6M43 52h-6" />
        <path d="M114 107l10 4v11l-10 5-10-5v-11z" /><path d="M104 111l10 4 10-4M114 115v12" fill="none" />
      </g>
      <path d="M44 58v38" stroke="#5ad77a" strokeWidth={1.500} />
      <path d="M45 96h37" stroke="#c9747a" strokeWidth={1.500} />
      <path d="M43 97l-9 9" stroke="#1a1a9c" strokeWidth={2} />
      <text x={70} y={75} textAnchor="middle" fontSize={15} fill="#4a555d" fontFamily="Roboto, sans-serif">TOP</text>
    </svg>
  );
}

function Centre() {
  return (
    <main className="flex min-w-0 flex-1 flex-col pt-[7px]">
      <div className="relative mb-[6px] flex-1 overflow-hidden">
        <div className="absolute top-px left-[939px] h-full w-0.5 bg-[#6ee37a]" />
        <div className="absolute top-[636px] right-[7px] left-2 h-[3px] border-y border-[#7d4341] bg-[#d0696a]" />
        <svg viewBox="0 0 145 8" className="absolute top-[632px] left-[370px] h-2 w-[145px]" aria-hidden="true">
          <path d="M0 4L60 1l85-1M30 3l60 3h55" fill="none" stroke="#000" strokeWidth={2} />
        </svg>
        <div className={`absolute top-[611px] left-0 h-6 w-1 ${DOTS}`} />
        <div className={`absolute top-[611px] right-0 h-6 w-1 ${DOTS}`} />
        <NavCube />
      </div>
      <div className="mb-0.5 flex gap-[3px] pl-[3px] text-[11px] text-[#dcdcdc]">
        <button className="flex h-[31px] w-[86px] items-center rounded-md border border-[#1c1c1c] bg-[#3a3a3a] pl-[5px]">
          <Icon n="freecad" className="mb-1 size-4" /><span className="ml-2">Start</span><span className="mb-[6px] ml-auto pr-[6px] text-[14px] font-bold text-black">✕</span>
        </button>
        <button className={`flex h-[31px] w-[178px] items-center rounded-md border border-[#1c1c1c] pl-[5px] ${PURPLE_TAB}`}>
          <Icon n="doc" className="mb-1 size-4" /><span className="ml-[10px]">@__________altang : 1*</span><span className="mb-[6px] ml-auto pr-[6px] text-[14px] font-bold text-black">✕</span>
        </button>
      </div>
    </main>
  );
}

/* ---------- shared controls ---------- */

function Check({ on = true, label, hidden, size = "size-4" }: { on?: boolean; label: string; hidden?: boolean; size?: string }) {
  const id = useId();
  return (
    <div className="flex items-center gap-[7px]">
      <span className={`relative ${size} shrink-0`}>
        <input id={id} type="checkbox" defaultChecked={on} aria-label={hidden ? label : undefined} className="peer block size-full appearance-none rounded-[2px] border border-[#2a2a2a] bg-[#222] checked:bg-[#0c0c0c]" />
        <svg viewBox="0 0 16 16" className="pointer-events-none absolute inset-0 size-full opacity-0 peer-checked:opacity-100" aria-hidden="true">
          <path d="M4 8l3 4 5-8" fill="none" stroke="#4a94e6" strokeWidth={2} />
        </svg>
      </span>
      {!hidden && <label htmlFor={id}>{label}</label>}
    </div>
  );
}

/* ---------- right dock ---------- */

function Group({ icon, title, pad, children }: { icon: string; title: string; pad: string; children: ReactNode }) {
  return (
    <section className="mt-2">
      <h3 className={`flex h-[25px] items-center gap-[5px] rounded-tl-md rounded-tr-[20px] bg-[#1e1e1e] pr-[19px] pl-1 text-[12px] font-bold text-[#e8e8e8] ${NOTO}`}>
        <Icon n={icon} className="size-4" />{title}
        <Tri dir="up" className="ml-auto size-2 text-[#a8a8a8]" />
      </h3>
      <div className={`rounded-b-[4px] border border-[#2a2a2a] bg-[#4d4d4d] px-[13px] ${pad}`}>{children}</div>
    </section>
  );
}

const SPLIT = "flex h-[22px] overflow-hidden rounded-[5px] border border-[#2a2a2a] bg-[#424242]";

function SplitIcon({ n }: { n: string }) {
  return (
    <div className={`${SPLIT} w-[42px] shrink-0`}>
      <button aria-label={n} className="flex flex-1 items-center justify-center"><Icon n={n} className="size-[14px]" /></button>
      <button aria-label={`${n} options`} className="flex w-5 items-center justify-center border-l border-[#2a2a2a]"><Tri dir="down" className="size-[7px] text-black" /></button>
    </div>
  );
}

function FilterRow({ eye }: { eye?: boolean }) {
  return (
    <div className="flex items-center gap-[6px]">
      <div className="mr-[9px] ml-px"><Check label="Toggle all" hidden /></div>
      <div className={`${SPLIT} flex-1 text-[11px] text-[#e4e4e4]`}>
        <button className="flex-1">Filters</button>
        <button aria-label="Filter options" className="flex w-5 items-center justify-center border-l border-[#2a2a2a]"><Tri dir="down" className="size-[7px] text-black" /></button>
      </div>
      {eye && <button aria-label="Show or hide" className={`${SPLIT} w-[23px] items-center justify-center`}><Icon n="eye" className="size-[14px]" /></button>}
      <SplitIcon n="tools" />
    </div>
  );
}

function ListBox({ gap, children }: { gap: string; children: ReactNode }) {
  return (
    <div className={`${gap} mr-[3px] ml-[3px] flex rounded-[5px] border border-[#1f1f1f] bg-[#242424] pt-1 pb-0.5 text-[11px] text-[#e4e4e4] ${NOTO}`}>
      <ul className="flex-1 pl-[7px]">{children}</ul>
      <div className="mr-2 flex w-[10px] flex-col items-center justify-between bg-[#212121] py-[7px]">
        <Tri dir="up" className="size-[7px] text-black" /><Tri dir="down" className="size-[7px] text-black" />
      </div>
    </div>
  );
}

const elements: [string, boolean][] = [
  ["4-Line", true], ["5-Line", false], ["6-Line", true], ["7-Circle", false], ["8-Line", true],
  ["9-Line", false], ["10-Line", false], ["11-Line", false], ["12-Line", false], ["13-Line", false],
];

function RightDock() {
  return (
    <aside className="flex w-[353px] shrink-0 flex-col">
      <div className="flex h-[23px] items-center pr-px">
        <h2 className="ml-[149px] text-[11px] text-[#dcdcdc]">Tasks</h2>
        <div className="ml-auto flex gap-2"><DockButtons n={2} /></div>
      </div>
      <div className="mr-[6px] mb-2 ml-2 flex-1 rounded-lg border border-[#1d1d1d] bg-[#3a3a3a] px-[7px]">
        <div className="flex justify-center pt-[18px] pb-[9px]">
          <button className="h-[30px] w-[102px] rounded-[5px] border border-[#2a2a2a] bg-[#4c4c4c] text-[11px] text-[#e4e4e4]">Close</button>
        </div>
        <Group icon="sketcher" title="Solver messages" pad="py-[13px]">
          <div className="flex h-[22px] items-center text-[11px] text-[#f0f0f0]">
            <span className="w-32">Under-constrained:</span>
            <a href="#dof" className="text-[#1795f5] underline">7 DoF(s)</a>
            <div className="ml-auto"><SplitIcon n="refreshBlue" /></div>
          </div>
        </Group>
        <Group icon="constraints" title="Constraints" pad="pt-3 pb-4">
          <FilterRow eye />
          <ListBox gap="mt-[6px]">
            {Array.from({ length: 10 }, (_, i) => (
              <li key={i} className="flex h-[26px] items-center">
                <Check label={`Constraint ${i + 1} active`} hidden size="size-[14px]" />
                <Icon n={i < 6 ? "coinc" : "equalsmall"} className="mr-[7px] ml-[7px] size-[22px]" />
                Constraint{i + 1}
              </li>
            ))}
          </ListBox>
        </Group>
        <Group icon="linew" title="Elements" pad="pt-3 pb-4">
          <FilterRow />
          <ListBox gap="mt-[9px]">
            {elements.map(([t, dim]) => {
              const c = t === "7-Circle";
              return (
                <li key={t} className="flex h-[26px] items-center gap-[6px]">
                  <div className="mr-px ml-px"><Check label={`${t} visible`} hidden size="size-[14px]" /></div>
                  <Icon n={c ? "circleedge" : dim ? "linegd" : "lineg"} />
                  <Icon n={c ? "dash" : "linestart"} />
                  <Icon n={c ? "dash" : "lineend"} />
                  <Icon n={c ? "circlecenter" : "dash"} />
                  {t}
                </li>
              );
            })}
          </ListBox>
        </Group>
      </div>
    </aside>
  );
}

/* ---------- preferences window ---------- */

const pages: { t: string; i: string; open?: boolean; subs?: string[] }[] = [
  { t: "General", i: "tools" },
  { t: "Display", i: "display", open: true, subs: ["3D View", "Light Sources", "UI", "Navigation", "Colors", "Advanced"] },
  { t: "Workbenches", i: "workbenches" }, { t: "Python", i: "python" }, { t: "Addon Manager", i: "package" },
  { t: "Import-Export", i: "impexp" }, { t: "Measure", i: "measure" }, { t: "Lattice2", i: "lattice" },
  { t: "Material", i: "material" }, { t: "Part/Part Design", i: "partpref" }, { t: "Sketcher", i: "sketcher" },
];

function PrefGroup({ title, children }: { title: string; children: ReactNode }) {
  return (
    <fieldset className="mx-[35px] mb-4">
      <legend className="mb-0.5 h-5 pl-[9px] leading-5">{title}</legend>
      <div className="rounded-lg border border-[#2a2a2a] bg-[#393939] px-2">{children}</div>
    </fieldset>
  );
}

function SwatchRow({ label, color }: { label: string; color: string }) {
  const id = useId();
  return (
    <div className="flex items-center justify-between">
      <label htmlFor={id}>{label}</label>
      <button id={id} className="flex h-[30px] w-[287px] items-center justify-center rounded-[5px] border border-[#2c2c2c] bg-[#4b4b4b]">
        <span className="mb-1 block border border-[#5e5e5e] p-px"><span className={`block h-3 w-7 border border-[#a5a5a5] ${color}`} /></span>
      </button>
    </div>
  );
}

function SelectRow({ label, value }: { label: string; value: string }) {
  const id = useId();
  return (
    <div className="flex items-center justify-between">
      <label htmlFor={id}>{label}</label>
      <div className="relative">
        <select id={id} className="block h-[26px] w-[287px] appearance-none border border-[#1c1c1c] bg-[#2d2d2d] pl-[9px]"><option>{value}</option></select>
        <span className="pointer-events-none absolute inset-y-px right-px flex w-4 items-center justify-center border-l border-[#222]"><Tri dir="down" className="size-2 text-[#9a9a9a]" /></span>
      </div>
    </div>
  );
}

function SpinRow({ label, value }: { label: string; value: string }) {
  const id = useId();
  return (
    <div className="flex items-center justify-between">
      <label htmlFor={id}>{label}</label>
      <div className="flex h-[26px] w-[287px] border border-[#1c1c1c] bg-[#2d2d2d]">
        <input id={id} type="text" inputMode="numeric" defaultValue={value} className="min-w-0 flex-1 bg-transparent pl-3 outline-none" />
        <div className="flex w-[17px] flex-col border-l border-[#1f1f1f]">
          <button aria-label={`Increase ${label}`} className="flex flex-1 items-center justify-center border-b border-[#1c1c1c]"><Tri dir="up" className="size-[6px] text-[#8a8a8a]" /></button>
          <button aria-label={`Decrease ${label}`} className="flex flex-1 items-center justify-center"><Tri dir="down" className="size-[6px] text-[#8a8a8a]" /></button>
        </div>
      </div>
    </div>
  );
}

const Checks = ({ items }: { items: [string, boolean][] }) => (
  <div className="pl-px">
    {items.map(([t, on]) => (
      <div key={t} className="flex h-6 items-center"><Check label={t} on={on} /></div>
    ))}
  </div>
);

const PBTN = "h-[30px] rounded-[5px] border border-[#262626] bg-[#434343]";

function Preferences() {
  return (
    <div role="dialog" aria-label="Preferences" className="absolute top-[226px] left-[829px] flex min-h-[932px] w-[1198px] flex-col overflow-hidden rounded-lg border border-[#494949] bg-[#212121] text-[11px] text-[#dedede] shadow-[0_12px_36px_rgba(0,0,0,0.5)]">
      <div className={`flex h-[31px] shrink-0 items-center bg-[#202020] pr-[9px] pl-[9px] text-[#8a8a8a] ${NOTO}`}>
        <Icon n="freecad" className="size-[14px]" />
        <span className="ml-[7px]">Preferences</span>
        <button aria-label="Close preferences" className="ml-auto size-3"><svg viewBox="0 0 12 12"><path d="M1 1l10 10M11 1L1 11" stroke="#8c8c8c" /></svg></button>
      </div>
      <div className="flex flex-1">
        <div className="flex w-[240px] shrink-0 flex-col px-[3px] pt-[15px] pb-[15px]">
          <ul className={`flex-1 rounded-[5px] border border-[#151515] pt-2 pr-[14px] pl-2 text-[#f2f2f2] ${NOTO}`}>
            {pages.map((p) => (
              <li key={p.t}>
                <div className="flex h-[38px] items-center">
                  <span className="flex w-5 justify-center"><Tri dir={p.open ? "down" : "right"} className="size-2 text-black" /></span>
                  <span className="flex h-full flex-1 items-center gap-[7px] bg-[#1e1e1e] pl-3"><Icon n={p.i} className="size-[22px]" />{p.t}</span>
                </div>
                {p.subs && (
                  <ul>
                    {p.subs.map((s) => (
                      <li key={s} className={`flex h-[27px] items-center ${s === "UI" ? "rounded-r-[4px] bg-[#550080] pl-[51px]" : "ml-10 bg-[#1e1e1e] pl-[11px]"}`}>{s}</li>
                    ))}
                  </ul>
                )}
              </li>
            ))}
          </ul>
          <button className={`mx-[13px] mt-5 ${PBTN}`}>Reset</button>
        </div>
        <div className="relative flex flex-1 flex-col bg-[#303030] pt-[15px] pb-[15px]">
          <h1 className={`mb-[22px] ml-4 text-[24px] leading-8 ${NOTO}`}>UI</h1>
          <PrefGroup title="Theme customization">
            <div className="flex flex-col gap-[7px] pt-[5px] pb-2">
              <p className="-mb-1 h-5 leading-5">This section lets you customize your current theme. The offered settings are optional for theme developers so they may or may not have an effect in your current theme.</p>
              <SwatchRow label="Accent color 1" color="bg-[#550080]" />
              <SwatchRow label="Accent color 2" color="bg-[#262626]" />
              <SwatchRow label="Accent color 3" color="bg-[#262626]" />
              <SelectRow label="Style sheet (advanced):" value="FreeCAD ColorPalette 2D" />
              <SelectRow label="Overlay style sheet:" value="FreeCAD ColorPalette Overlay" />
            </div>
          </PrefGroup>
          <PrefGroup title="Tree view">
            <div className="flex flex-col gap-[5px] pt-2 pb-1">
              <SpinRow label="Icon size" value="17" />
              <SpinRow label="Additional row spacing" value="0" />
              <Checks items={[["Resizable columns", false], ["Show visibility icon", true], ["Hide description", true], ["Hide Internal Names", true], ["Hide scroll bar", true], ["Hide header", true]]} />
            </div>
          </PrefGroup>
          <PrefGroup title="Overlay">
            <div className="pt-[6px] pb-1">
              <Checks items={[["Hide tab bar", true], ["Hint show tab bar", false], ["Hide property view scroll bar", false], ["Auto hide in non 3D view", true], ["Auto mouse pass through", true], ["Auto mouse wheel pass through", true]]} />
            </div>
          </PrefGroup>
          <div className="mt-auto flex justify-end gap-2 pr-[17px]">
            <button className={`w-[100px] ${PBTN}`}>OK</button>
            <button className={`w-[100px] ${PBTN}`}>Cancel</button>
            <button className={`w-[100px] ${PBTN}`}>Apply</button>
          </div>
          <svg viewBox="0 0 12 12" className="absolute right-0 bottom-0 size-3" aria-hidden="true">
            <path d="M10 1h2M7 4h2M10 4h2M4 7h2M7 7h2M10 7h2M1 10h2M4 10h2M7 10h2M10 10h2" stroke="#9a9a9a" strokeWidth={2} />
          </svg>
        </div>
      </div>
    </div>
  );
}

/* ---------- status bar and task bar ---------- */

const SB = "flex h-[30px] items-center rounded-[5px] border border-[#1e1e1e] bg-[#3a3a3a] pr-[6px]";

function StatusBar() {
  return (
    <footer className="flex h-[34px] items-center pl-0.5 text-[11px] text-[#e4e4e4]">
      <span>Preselected: Unnamed.Sketch003.H_Axis (13.89 mm, 4.43 mm, 9.00 µm)</span>
      <div className="ml-auto flex gap-2 pr-px">
        <button className={`${SB} w-[57px]`}><Icon n="mail" className="size-[15px]" /><span className="ml-[6px]">1</span><Tri dir="up" className="ml-auto size-2 text-black" /></button>
        <button className={`${SB} w-[93px]`}><Icon n="mouse" className="ml-[14px] size-4" /><span className="ml-[3px]">Blender</span><Tri dir="up" className="ml-auto size-2 text-black" /></button>
        <button className={`${SB} w-[148px]`}><span className="ml-[9px] whitespace-nowrap">204,81 mm x 132,20 mm</span><Tri dir="up" className="ml-auto size-2 text-black" /></button>
      </div>
    </footer>
  );
}

const apps: { n: string; run?: boolean; wide?: boolean; g: ReactNode }[] = [
  { n: "File Explorer", run: true, g: <><path d="M1 3h8l2 3h12v4H1z" fill="#d99a10" /><path d="M1 7h22v15H1z" fill="#fcc937" /><path d="M5 15h14v7H5z" fill="#2b87d8" /><path d="M8 18h8v1H8z" fill="#0f5ba0" /></> },
  { n: "Media Player", g: <><rect x={2} y={3} width={20} height={18} rx={2} fill="#6b7f92" /><path d="M4 5h16v14H4z" fill="#9cc3e4" /><circle cx={12} cy={12} r={7} fill="#f07a1c" /><path d="M10 8l6 4-6 4z" fill="#fff" /></> },
  { n: "Copilot", g: <><path d="M8 2h8c2 0 3 2 3 4l-3 0c-2 0-3 1-3 3l-3 9c-1 3-2 4-4 4-3 0-5-2-5-5 0-4 2-9 3-12 1-2 2-3 4-3z" fill="#27a3ea" /><path d="M16 22H8c-2 0-3-2-3-4l3 0c2 0 3-1 3-3l3-9c1-3 2-4 4-4 3 0 5 2 5 5 0 4-2 9-3 12-1 2-2 3-4 3z" fill="#d653b4" /><path d="M1 16c0-4 2-9 3-12 2 0 5 1 4 5l-3 9c-2 0-4 0-4-2z" fill="#55c27a" /><path d="M23 8c0 4-2 9-3 12-2 0-5-1-4-5l3-9c2 0 4 0 4 2z" fill="#f58f3c" /></> },
  { n: "Edge", g: <><circle cx={12} cy={12} r={11} fill="#1479cf" /><path d="M1 11C2 4 7 1 12 1c7 0 11 5 11 9 0 5-7 6-9 3 1-4-2-6-5-6-4 0-7 2-8 4z" fill="#3fd08c" /><path d="M9 8c-4 6 0 13 7 13-8 4-15-3-14-9 1-3 4-4 7-4z" fill="#0c54a4" /></> },
  { n: "Opera", g: <><circle cx={12} cy={12} r={11} fill="#e8122a" /><ellipse cx={12} cy={12} rx={5} ry={8} fill="#1c1c1c" /></> },
  { n: "Chrome", run: true, g: <><circle cx={12} cy={13} r={10} fill="#e33b2e" /><path d="M12 23A10 10 0 0 1 3 8l6 7z" fill="#2fa24c" /><path d="M22 11a10 10 0 0 1-10 12l5-9z" fill="#fbc116" /><circle cx={12} cy={13} r={4.800} fill="#fff" /><circle cx={12} cy={13} r={3.600} fill="#2f7de8" /><circle cx={19} cy={4} r={5} fill="#000" /><path d="M17 6l2-5 2 5" stroke="#fff" fill="none" /></> },
  { n: "Calculator", g: <><rect x={3} y={1} width={18} height={22} rx={2} fill="#7c8892" /><path d="M5 3h14v5H5z" fill="#5fc7f4" /><path d="M5 10h4v3H5zM10 10h4v3h-4zM5 14h4v3H5zM10 14h4v3h-4zM5 18h4v3H5zM10 18h4v3h-4zM15 10h4v3h-4z" fill="#d7dde2" /><path d="M15 14h4v7h-4z" fill="#1f5fa8" /></> },
  { n: "Epic Games", g: <><path d="M2 1h20v17l-10 5-10-5z" fill="#000" /><text x={12} y={11} textAnchor="middle" fontSize={8} fontWeight={700} fill="#fff" fontFamily="Roboto, sans-serif">EPIC</text><path d="M6 14h12M9 18h6" stroke="#bbb" /></> },
  { n: "Blender", g: <><path d="M2 10h7L6 7l3-2 12 9a7 6 0 1 1-13 3L3 18z" fill="#f08a1c" /><circle cx={15} cy={15} r={4.500} fill="#fff" /><circle cx={15} cy={15} r={2.800} fill="#24599c" /></> },
  { n: "FreeCAD", run: true, g: <g transform="translate(1 1)"><FreeCadMark /></g> },
  { n: "GIMP", g: <><path d="M2 11l5 1 2-3h6l7-8c0 6 0 12-3 16-3 5-10 5-13 0z" fill="#6e675c" /><circle cx={10} cy={11} r={2.600} fill="#fff" /><circle cx={15} cy={11} r={3} fill="#fff" /><circle cx={10} cy={11} r={1.300} /><circle cx={15} cy={11} r={1.400} /><path d="M3 16l6 3" stroke="#c87a2a" strokeWidth={2} /></> },
  { n: "Notepad", run: true, g: <><rect x={3} y={2} width={18} height={20} rx={2} fill="#6ed3f5" /><path d="M6 1v3M9 1v3M12 1v3M15 1v3M18 1v3" stroke="#1779a8" /><path d="M7 9h10M7 13h10M7 17h10" stroke="#1b6e9c" strokeWidth={1.600} /><path d="M3 20h18v3H3z" fill="#c76a1c" /></> },
  { n: "Snipping Tool", run: true, wide: true, g: <><rect x={2} y={2} width={18} height={19} rx={2} fill="#f4f4f4" /><rect x={5} y={6} width={12} height={12} fill="none" stroke="#e04a2a" strokeDasharray="3 1.500" strokeWidth={2} /><path d="M22 12l-7 9M14 14l7 8" stroke="#1b93d8" strokeWidth={2} /></> },
];

function TaskBar() {
  return (
    <div className={`flex h-[45px] items-center border-t border-[#3d3d3d] bg-[#1c1c1c] text-white ${NOTO}`}>
      <div className="flex flex-1 items-center justify-center pl-1">
        <div className="flex items-center">
          <button aria-label="Start" className="mr-[14px] size-6">
            <svg viewBox="0 0 24 24"><path d="M0 0h11v11H0zM13 0h11v11H13zM0 13h11v11H0zM13 13h11v11H13z" fill="#3cb4f2" /></svg>
          </button>
          <label className="relative mr-[14px] flex h-8 w-[217px] items-center rounded-full border border-[#4a4a4a] bg-[#333] pl-[11px]">
            <svg viewBox="0 0 16 16" className="size-4" aria-hidden="true"><circle cx={7} cy={6.500} r={5} fill="none" stroke="#e8e8e8" strokeWidth={1.300} /><path d="M10.500 10.500L15 15" stroke="#e8e8e8" strokeWidth={1.300} /></svg>
            <input type="search" placeholder="Ara" className="ml-2 w-[100px] bg-transparent text-[13px] outline-none placeholder:text-[#c8c8c8]" />
            <svg viewBox="0 0 46 22" className="mr-1 ml-auto h-[22px] w-[46px]" aria-hidden="true">
              <path d="M3 14l7-8 5 4 6-9 6 7 5-3 10 9z" fill="#9d8bd6" /><path d="M15 10l6-9 3 9zM30 8l3-4 4 8z" fill="#f2c6cf" />
              <circle cx={26} cy={3} r={2.500} fill="#f5b82e" /><ellipse cx={23} cy={15} rx={21} ry={6} fill="#bfe5ee" />
              <ellipse cx={23} cy={14} rx={15} ry={4} fill="#2f97c6" /><ellipse cx={23} cy={14} rx={7} ry={2} fill="#d6f5f8" />
            </svg>
          </label>
          <div className="flex gap-5">
            {apps.map((a) => (
              <button key={a.n} aria-label={a.n} className="relative size-6">
                <svg viewBox="0 0 24 24">{a.g}</svg>
                {a.run && <span className={`absolute -bottom-[6px] left-1/2 h-[3px] -translate-x-1/2 rounded-full bg-[#9a9a9a] ${a.wide ? "w-4" : "w-[6px]"}`} />}
              </button>
            ))}
          </div>
        </div>
      </div>
      <div className="absolute right-[18px] flex items-center">
        <svg viewBox="0 0 100 16" className="mr-[18px] h-4 w-[100px]" fill="none" stroke="#fff" aria-hidden="true">
          <path d="M1 11l5-5 5 5" strokeWidth={1.600} />
          <rect x={27} y={3} width={15} height={10} rx={1} strokeWidth={1.300} /><path d="M29 6h11M29 8.500h11" strokeDasharray="1.500 1" /><path d="M31 11h7" />
          <path d="M59 6c5-5 11-5 16 0M61.500 8.500c3-3 8-3 11 0M64 11c2-2 4-2 6 0" strokeWidth={1.400} /><circle cx={67} cy={13} r={1.300} fill="#fff" stroke="none" />
          <path d="M83 6v4h3l4 4V2l-4 4zM92 6c1 1 1 3 0 4" strokeWidth={1.200} /><path d="M94 4c2 2 2 6 0 8M96 2c3 3 3 9 0 12" stroke="#777" />
        </svg>
        <div className="text-right text-[11px] leading-4"><div>16:31</div><div>25.12.2024</div></div>
      </div>
    </div>
  );
}

export default function App() {
  return (
    <div className="relative flex min-h-screen flex-col overflow-hidden bg-[#252525] font-['Roboto',sans-serif]">
      <TitleBar />
      <MenuRow />
      <Toolbar />
      <div className="flex flex-1">
        <LeftDock />
        <Centre />
        <RightDock />
      </div>
      <StatusBar />
      <TaskBar />
      <Preferences />
    </div>
  );
}
